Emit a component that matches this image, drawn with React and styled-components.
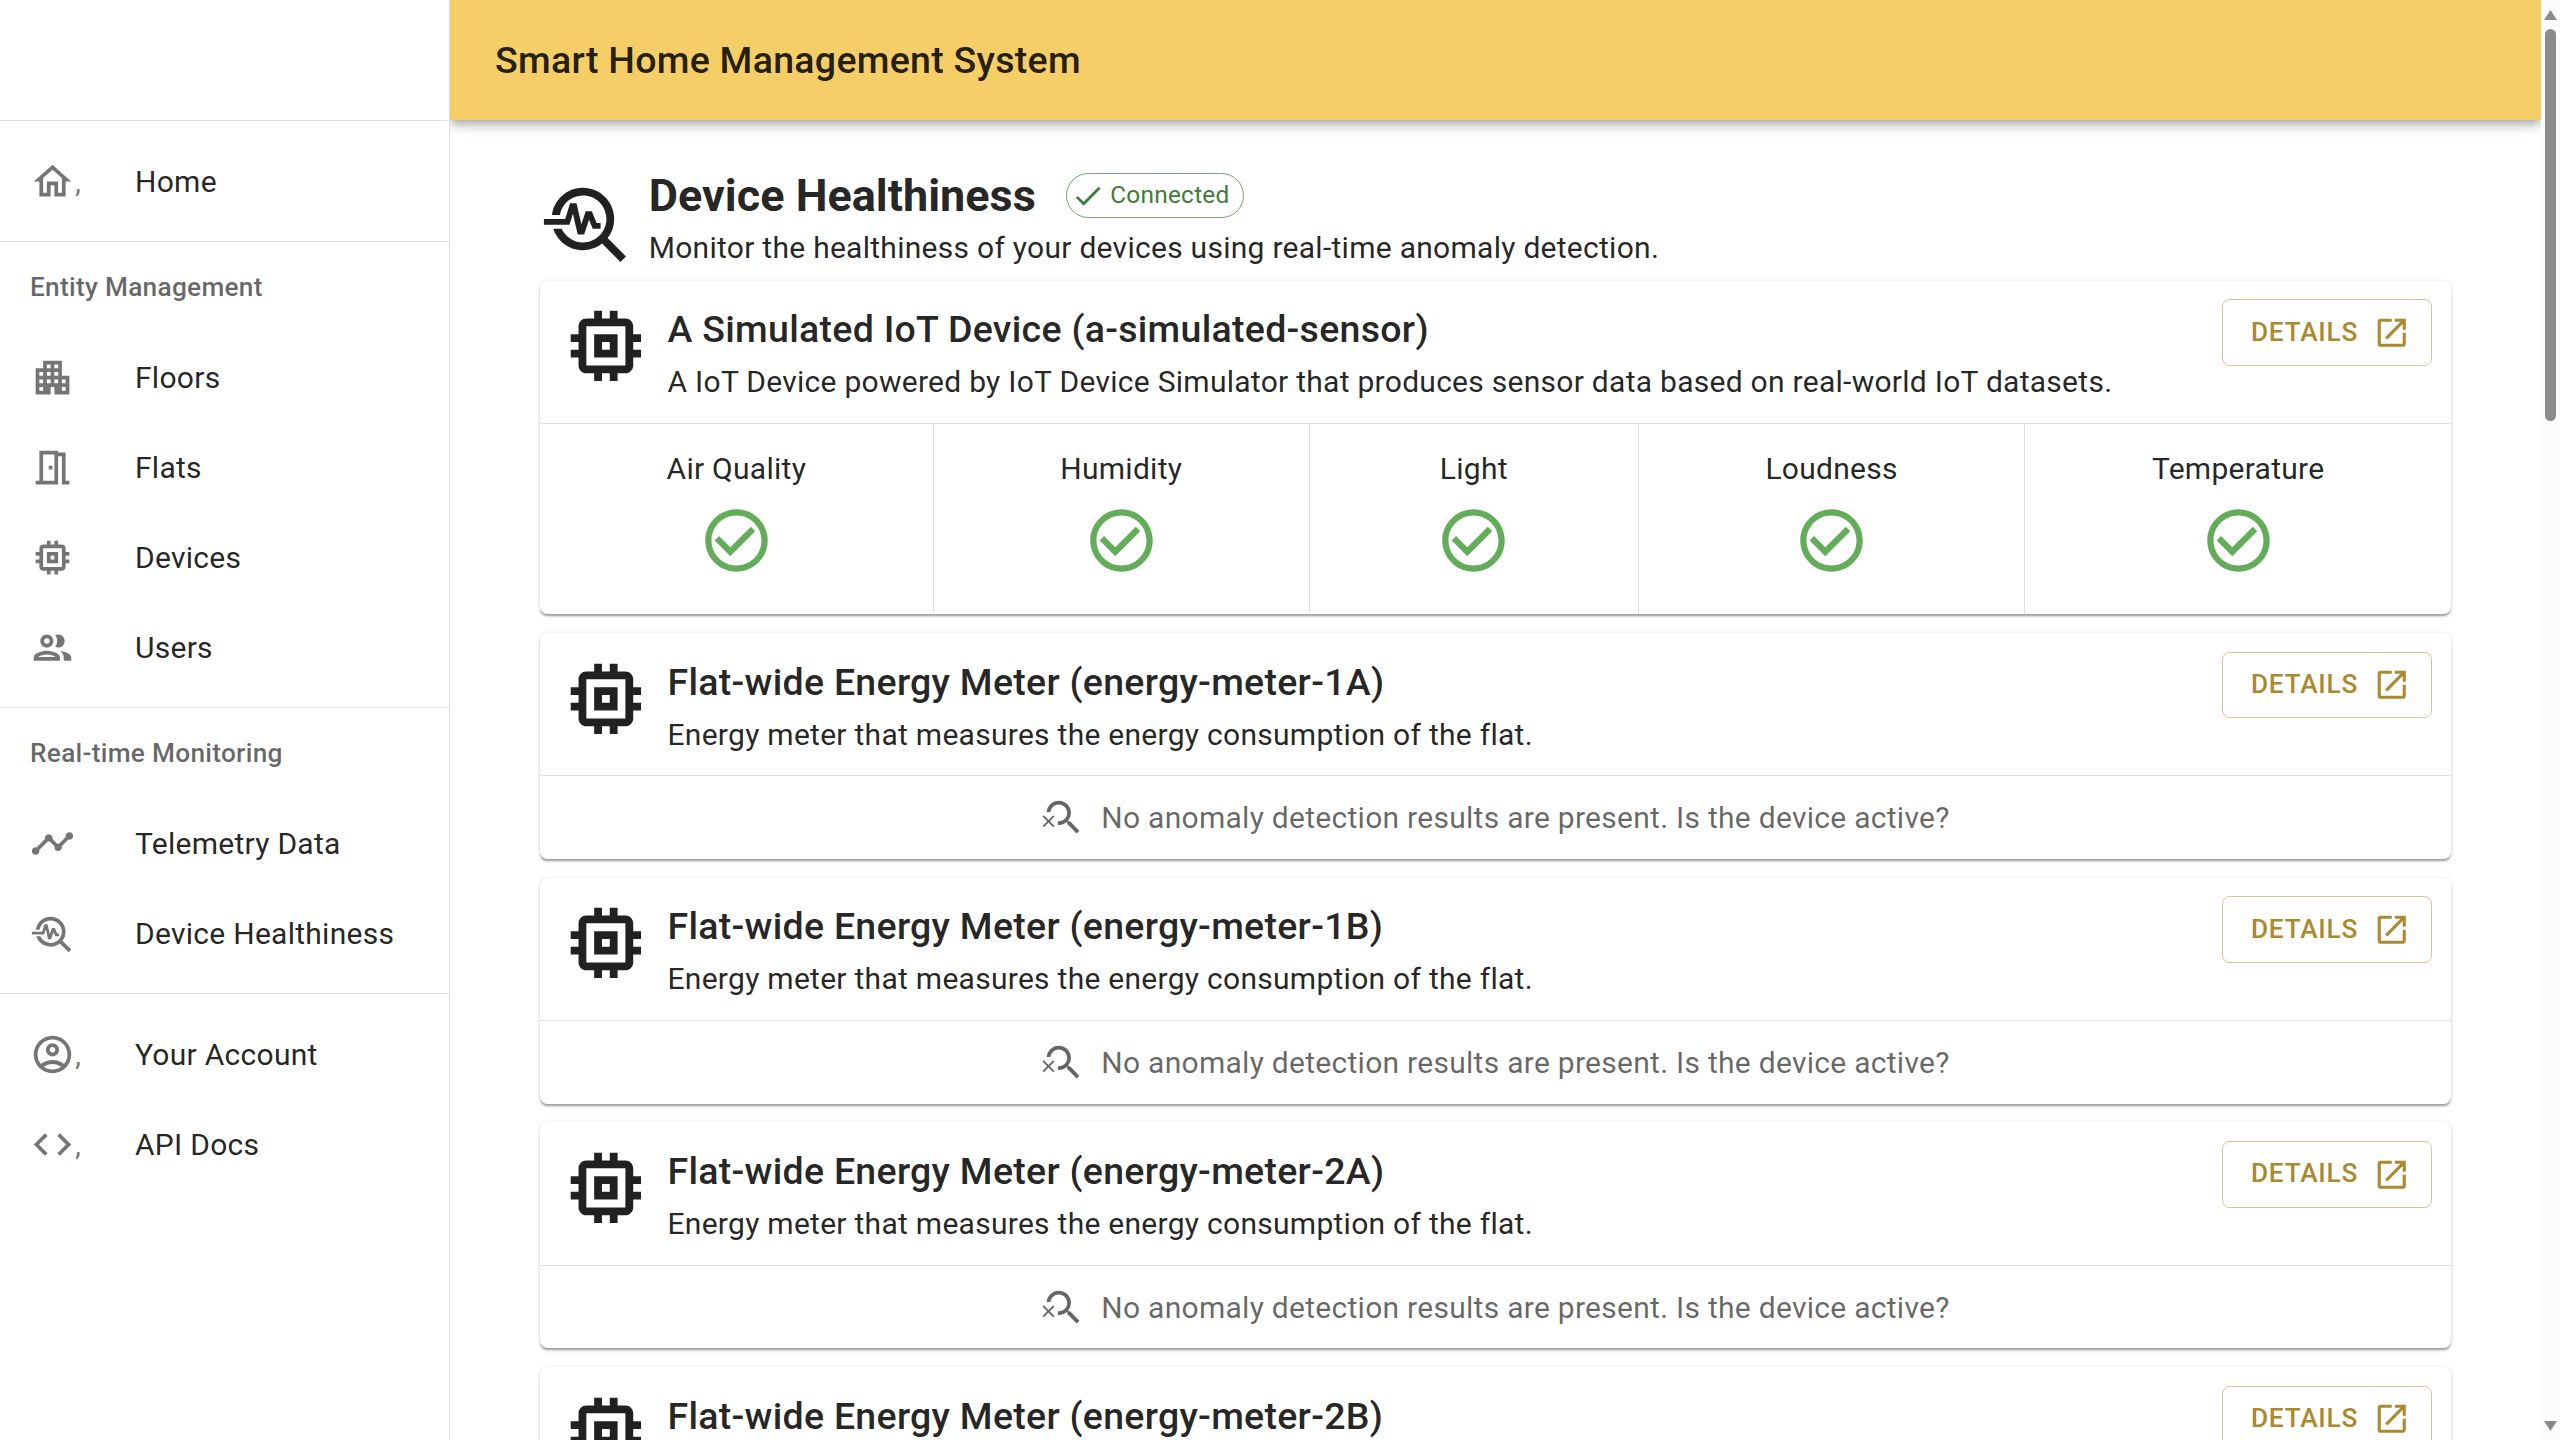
import React from "react";
import styled, { createGlobalStyle, css } from "styled-components";
import {
  MdOutlineHome,
  MdApartment,
  MdOutlineMeetingRoom,
  MdMemory,
  MdTimeline,
  MdTroubleshoot,
  MdOutlineAccountCircle,
  MdCode,
  MdOpenInNew,
  MdCheck,
  MdCheckCircleOutline,
  MdSearchOff,
} from "react-icons/md";

const ink = "rgba(0, 0, 0, 0.87)";
const muted = "rgba(0, 0, 0, 0.6)";
const line = "rgba(0, 0, 0, 0.12)";
const gold = "#ab892f";

const GlobalStyle = createGlobalStyle`
  *, *::before, *::after { box-sizing: border-box; }
  body {
    margin: 0;
    overflow: hidden;
    background: #fff;
    color: ${ink};
    font: 400 30px/1.5 Roboto, "Liberation Sans", sans-serif;
    letter-spacing: 0.275px;
  }
`;

const Page = styled.div`
  display: flex;
  height: 1440px;
  overflow: hidden;
`;

const Sidebar = styled.nav`
  flex: none;
  width: 450px;
  border-right: 1px solid ${line};
  background: #fff;
`;

const SidebarTop = styled.div`
  height: 120px;
`;

const NavList = styled.div`
  border-top: 1px solid ${line};
  padding: ${(p) => (p.$titled ? 0 : 15)}px 0 15px;
`;

const NavTitle = styled.div`
  padding: 0 30px;
  font-size: 26.25px;
  font-weight: 500;
  line-height: 90px;
  color: ${muted};
`;

const NavItem = styled.a`
  display: flex;
  align-items: center;
  height: 90px;
  padding: 0 30px;
`;

const NavIcon = styled.span`
  display: flex;
  flex: none;
  width: 105px;
  color: rgba(0, 0, 0, 0.54);

  svg {
    width: 45px;
    height: 45px;
  }
`;

const Content = styled.div`
  display: flex;
  flex-direction: column;
  flex: 1;
  min-width: 0;
  overflow: hidden;
`;

const AppBar = styled.header`
  display: flex;
  align-items: center;
  flex: none;
  height: 120px;
  padding: 0 45px;
  background: #f5ce67;
  font-size: 37.5px;
  font-weight: 500;
  letter-spacing: 0.0075em;
  box-shadow:
    0 3.75px 7.5px -1.875px rgba(0, 0, 0, 0.2),
    0 7.5px 9.375px 0 rgba(0, 0, 0, 0.14),
    0 1.875px 18.75px 0 rgba(0, 0, 0, 0.12);
`;

const Main = styled.main`
  padding: 45px 90px 0;
`;

const PageHeader = styled.div`
  display: flex;
  align-items: flex-start;
  gap: 15px;
  height: 106px;
  margin-bottom: 9.5px;
`;

const HeaderIcon = styled(MdTroubleshoot)`
  flex: none;
  width: 93.75px;
  height: 93.75px;
  margin-top: 10.75px;
`;

const TitleRow = styled.div`
  display: flex;
  align-items: center;
  gap: 30px;
  height: 60px;
  padding-top: 1px;
`;

const PageTitle = styled.h1`
  margin: 0;
  font-size: 45px;
  font-weight: 700;
  line-height: 60px;
  letter-spacing: 0;
`;

const Chip = styled.span`
  display: inline-flex;
  align-items: center;
  height: 45px;
  padding: 0 13px 0 4px;
  border: 1px solid rgba(64, 123, 58, 0.7);
  border-radius: 30px;
  color: #407b3a;
  font-size: 24.375px;

  svg {
    width: 33.75px;
    height: 33.75px;
    margin-right: 5.6px;
  }
`;

const CardStack = styled.div`
  display: flex;
  flex-direction: column;
  gap: 18.75px;
`;

const Card = styled.section`
  border-radius: 7.5px;
  background: #fff;
  box-shadow:
    0 3.75px 1.875px -1.875px rgba(0, 0, 0, 0.2),
    0 1.875px 1.875px 0 rgba(0, 0, 0, 0.14),
    0 1.875px 5.625px 0 rgba(0, 0, 0, 0.12);
`;

const CardHeader = styled.div`
  display: flex;
  align-items: flex-start;
  height: 142.5px;
  padding: 18.75px;
`;

const DeviceIcon = styled(MdMemory)`
  flex: none;
  width: 93.75px;
  height: 93.75px;
  margin-right: 15px;
`;

const CardText = styled.div`
  flex: 1;
  min-width: 0;
`;

const CardTitle = styled.h2`
  margin: 0;
  font-size: 37.5px;
  font-weight: 500;
  line-height: 60px;
  letter-spacing: 0.0075em;
`;

const BodyText = styled.p`
  margin: 0;
  line-height: 45px;
`;

const DetailsButton = styled.button`
  display: inline-flex;
  align-items: center;
  padding: 9.375px 28.125px;
  border: 1px solid rgba(171, 137, 47, 0.5);
  border-radius: 7.5px;
  background: none;
  color: ${gold};
  font: 500 26.25px/1.75 Roboto, "Liberation Sans", sans-serif;
  letter-spacing: 0.02857em;
  text-transform: uppercase;

  svg {
    width: 37.5px;
    height: 37.5px;
    margin: 0 -7.5px 0 15px;
  }
`;

const SensorRow = styled.div`
  display: flex;
  height: 191.1px;
  border-top: 1px solid ${line};
`;

const Sensor = styled.div`
  display: flex;
  flex: 1 1 auto;
  flex-direction: column;
  align-items: center;
  gap: 12px;
  padding-top: 22px;

  & + & {
    border-left: 1px solid ${line};
  }

  svg {
    width: 75px;
    height: 75px;
    color: #63ad5a;
  }
`;

const EmptyRow = styled.div`
  display: flex;
  align-items: center;
  justify-content: center;
  gap: 15px;
  height: 83.5px;
  border-top: 1px solid ${line};
  color: ${muted};

  svg {
    width: 45px;
    height: 45px;
  }
`;

const ScrollTrack = styled.div`
  display: flex;
  flex: none;
  flex-direction: column;
  align-items: center;
  width: 19px;
  padding: 10px 0 9px;
  background: #fcfcfc;
`;

const ScrollThumb = styled.div`
  width: 11px;
  height: 392px;
  margin: 9px 0 auto;
  border-radius: 6px;
  background: #8b8b8b;
`;

const arrowShape = {
  up: css`
    clip-path: polygon(50% 0, 100% 100%, 0 100%);
  `,
  down: css`
    clip-path: polygon(0 0, 100% 0, 50% 100%);
  `,
};

const ScrollArrow = styled.div`
  width: 13px;
  height: 10px;
  background: #8b8b8b;
  ${(p) => arrowShape[p.$direction]}
`;

function GroupIcon() {
  return (
    <svg viewBox="0 0 24 24" fill="currentColor">
      <path d="M9 13.75c-2.34 0-7 1.17-7 3.5V19h14v-1.75c0-2.33-4.66-3.5-7-3.5zM4.34 17c.84-.58 2.87-1.25 4.66-1.25s3.82.67 4.66 1.25H4.34zM9 12c1.93 0 3.5-1.57 3.5-3.5S10.93 5 9 5 5.5 6.57 5.5 8.5 7.07 12 9 12zm0-5c.83 0 1.5.67 1.5 1.5S9.83 10 9 10s-1.5-.67-1.5-1.5S8.17 7 9 7zm7.04 6.81c1.16.84 1.96 1.96 1.96 3.44V19h4v-1.75c0-2.02-3.5-3.17-5.96-3.44zM15 12c1.93 0 3.5-1.57 3.5-3.5S16.93 5 15 5c-.54 0-1.04.13-1.5.35.63.89 1 1.98 1 3.15s-.37 2.26-1 3.15c.46.22.96.35 1.5.35z" />
    </svg>
  );
}

const navGroups = [
  { items: [{ icon: MdOutlineHome, label: "Home", comma: true }] },
  {
    title: "Entity Management",
    items: [
      { icon: MdApartment, label: "Floors" },
      { icon: MdOutlineMeetingRoom, label: "Flats" },
      { icon: MdMemory, label: "Devices" },
      { icon: GroupIcon, label: "Users" },
    ],
  },
  {
    title: "Real-time Monitoring",
    items: [
      { icon: MdTimeline, label: "Telemetry Data" },
      { icon: MdTroubleshoot, label: "Device Healthiness" },
    ],
  },
  {
    items: [
      { icon: MdOutlineAccountCircle, label: "Your Account", comma: true },
      { icon: MdCode, label: "API Docs", comma: true },
    ],
  },
];

const meter = (id) => ({
  title: `Flat-wide Energy Meter (energy-meter-${id})`,
  text: "Energy meter that measures the energy consumption of the flat.",
});

const devices = [
  {
    title: "A Simulated IoT Device (a-simulated-sensor)",
    text: "A IoT Device powered by IoT Device Simulator that produces sensor data based on real-world IoT datasets.",
    sensors: ["Air Quality", "Humidity", "Light", "Loudness", "Temperature"],
  },
  meter("1A"),
  meter("1B"),
  meter("2A"),
  meter("2B"),
];

function DeviceCard({ device }) {
  return (
    <Card>
      <CardHeader>
        <DeviceIcon />
        <CardText>
          <CardTitle>{device.title}</CardTitle>
          <BodyText>{device.text}</BodyText>
        </CardText>
        <DetailsButton>
          Details
          <MdOpenInNew />
        </DetailsButton>
      </CardHeader>
      {device.sensors ? (
        <SensorRow>
          {device.sensors.map((name) => (
            <Sensor key={name}>
              <BodyText>{name}</BodyText>
              <MdCheckCircleOutline />
            </Sensor>
          ))}
        </SensorRow>
      ) : (
        <EmptyRow>
          <MdSearchOff />
          No anomaly detection results are present. Is the device active?
        </EmptyRow>
      )}
    </Card>
  );
}

export default function App() {
  return (
    <Page>
      <GlobalStyle />
      <Sidebar>
        <SidebarTop />
        {navGroups.map((group, i) => (
          <NavList key={i} $titled={Boolean(group.title)}>
            {group.title && <NavTitle>{group.title}</NavTitle>}
            {group.items.map(({ icon: Icon, label, comma }) => (
              <NavItem key={label}>
                <NavIcon>
                  <Icon />
                  {comma && ","}
                </NavIcon>
                {label}
              </NavItem>
            ))}
          </NavList>
        ))}
      </Sidebar>
      <Content>
        <AppBar>Smart Home Management System</AppBar>
        <Main>
          <PageHeader>
            <HeaderIcon />
            <div>
              <TitleRow>
                <PageTitle>Device Healthiness</PageTitle>
                <Chip>
                  <MdCheck />
                  Connected
                </Chip>
              </TitleRow>
              <BodyText>
                Monitor the healthiness of your devices using real-time anomaly detection.
              </BodyText>
            </div>
          </PageHeader>
          <CardStack>
            {devices.map((device) => (
              <DeviceCard key={device.title} device={device} />
            ))}
          </CardStack>
        </Main>
      </Content>
      <ScrollTrack>
        <ScrollArrow $direction="up" />
        <ScrollThumb />
        <ScrollArrow $direction="down" />
      </ScrollTrack>
    </Page>
  );
}
